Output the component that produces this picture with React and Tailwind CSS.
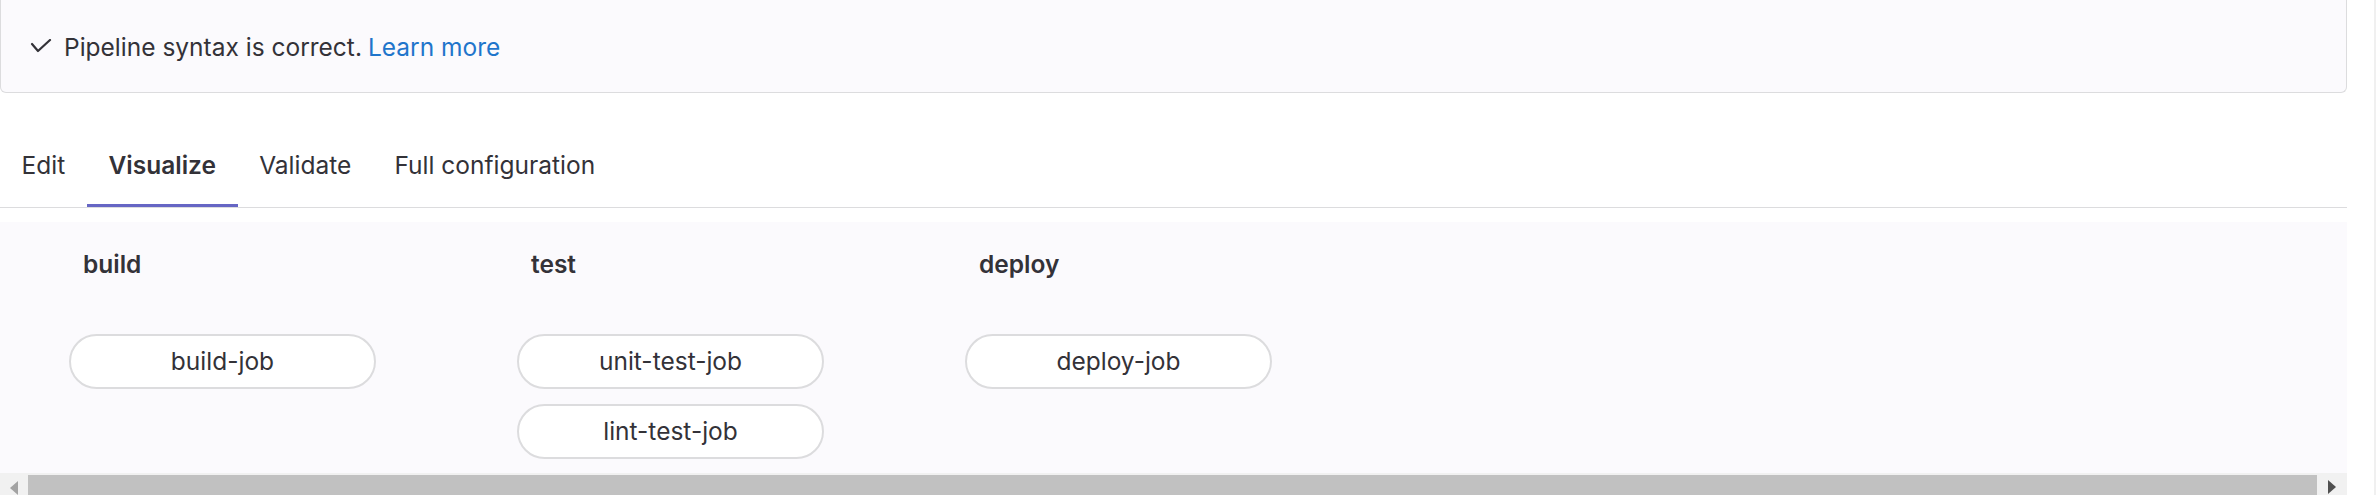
import React from "react";

const font = { fontFamily: "Inter, 'Noto Sans', sans-serif" };

function Pill({ children }) {
  return (
    <div className="h-[55px] w-[307px] rounded-full border-2 border-[#dcdcde] bg-white flex items-center justify-center text-[24.5px] text-[#333238] leading-none">
      {children}
    </div>
  );
}

function Stage({ name, jobs }) {
  return (
    <div className="w-[307px] flex flex-col">
      <div className="h-[36px] pl-[14px] flex items-center text-[24.5px] font-semibold text-[#333238]">
        {name}
      </div>
      <div className="mt-[52px] flex flex-col gap-[15px]">
        {jobs.map((j) => (
          <Pill key={j}>{j}</Pill>
        ))}
      </div>
    </div>
  );
}

export default function App() {
  const tabs = ["Edit", "Visualize", "Validate", "Full configuration"];
  return (
    <div
      className="w-[2376px] h-[495px] overflow-hidden bg-white flex"
      style={font}
    >
      <div className="w-[2347px] flex flex-col shrink-0">
        {/* Alert */}
        <div className="h-[93px] shrink-0 border-x border-b border-[#dcdcde] rounded-b-[6px] bg-[#fbfafd] flex items-center pt-[2px] pl-[29px] text-[24.5px] text-[#333238]">
          <svg width="22" height="16" viewBox="0 0 22 16" className="mr-[12px] shrink-0">
            <polyline
              points="2,5 8,12 20,1"
              fill="none"
              stroke="#333238"
              strokeWidth="2.2"
              strokeLinecap="round"
              strokeLinejoin="round"
            />
          </svg>
          <span>Pipeline syntax is correct.</span>
          <span className="ml-[6px] text-[#1f75cb]">Learn more</span>
        </div>

        {/* Tabs */}
        <div className="mt-[30px] flex border-b border-[#dcdcde] shrink-0">
          {tabs.map((t) => (
            <div
              key={t}
              className={
                t === "Visualize"
                  ? "h-[84px] px-[21.6px] flex items-center text-[24.5px] font-semibold text-[#333238] shadow-[inset_0_-3px_0_0_#6666c4]"
                  : "h-[84px] px-[21.6px] flex items-center text-[24.5px] text-[#333238]"
              }
            >
              {t}
            </div>
          ))}
        </div>

        {/* Pipeline graph */}
        <div className="mt-[14px] h-[251px] shrink-0 bg-[#fbfafd] pt-[24px] pl-[69px] flex gap-[141px]">
          <Stage name="build" jobs={["build-job"]} />
          <Stage name="test" jobs={["unit-test-job", "lint-test-job"]} />
          <Stage name="deploy" jobs={["deploy-job"]} />
        </div>

        {/* Horizontal scrollbar */}
        <div className="h-[25px] shrink-0 bg-[#f1f1f1] flex">
          <div className="w-[28px] flex items-start justify-center pt-[8px]">
            <svg width="8" height="14" viewBox="0 0 8 14">
              <polygon points="8,0 8,14 0,7" fill="#a3a3a3" />
            </svg>
          </div>
          <div className="flex-1 pt-[2px] pb-[2px]">
            <div className="h-full bg-[#c1c1c1]" />
          </div>
          <div className="w-[30px] flex items-start justify-center pt-[7px]">
            <svg width="8" height="14" viewBox="0 0 8 14">
              <polygon points="0,0 0,14 8,7" fill="#505050" />
            </svg>
          </div>
        </div>
      </div>
      <div className="flex-1" />
      <div className="w-[2px] bg-[#f0f0f0]" />
    </div>
  );
}
